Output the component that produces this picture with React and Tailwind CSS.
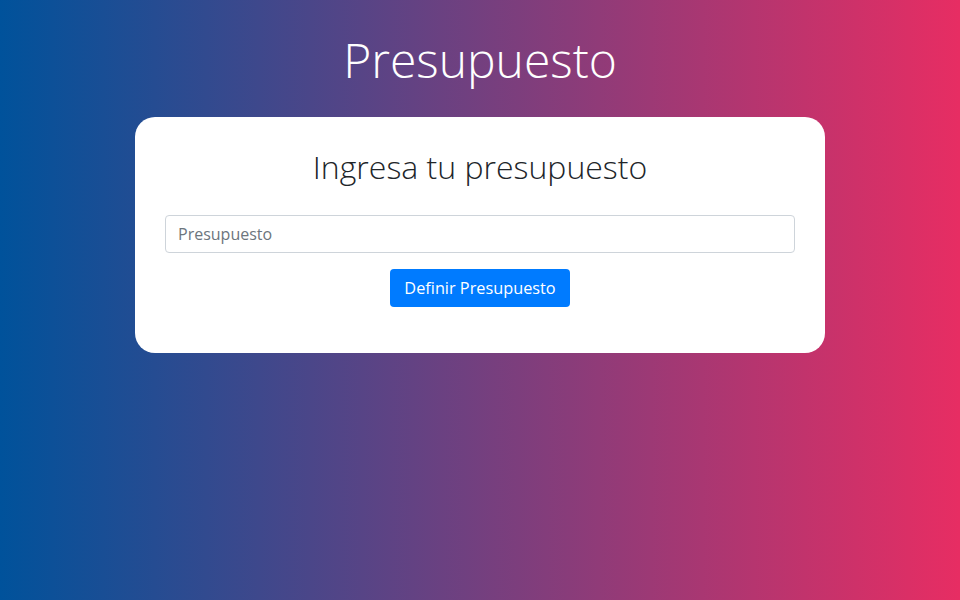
import { useState } from 'react';

const App = () => {
  const [budget, setBudget] = useState('');

  return (
    <div className="min-h-screen bg-[linear-gradient(to_right,#00529b,#e72d63)] font-['Open_Sans',sans-serif]">
      <div className="mx-auto w-[690px] pt-[31px]">
        <h1 className="text-center text-[48px] font-light leading-[1.2] text-white">Presupuesto</h1>

        <div className="mt-[28px] rounded-[20px] bg-white px-[30px] pt-[31px] pb-[46px]">
          <h2 className="text-center text-[32px] font-light leading-[1.2] text-[#212529]">
            Ingresa tu presupuesto
          </h2>

          <form className="mt-[29px] flex flex-col items-center" onSubmit={(e) => e.preventDefault()}>
            <input
              type="number"
              value={budget}
              onChange={(e) => setBudget(e.target.value)}
              placeholder="Presupuesto"
              className="h-[38px] w-full rounded-[4px] border border-[#ced4da] px-3 text-base text-[#495057] placeholder:text-[#6c757d] focus:outline-none"
            />
            <button
              type="submit"
              className="mt-4 h-[38px] rounded-[4px] bg-[#007bff] px-[14px] text-[16.3px] text-white"
            >
              Definir Presupuesto
            </button>
          </form>
        </div>
      </div>
    </div>
  );
};

export default App;
